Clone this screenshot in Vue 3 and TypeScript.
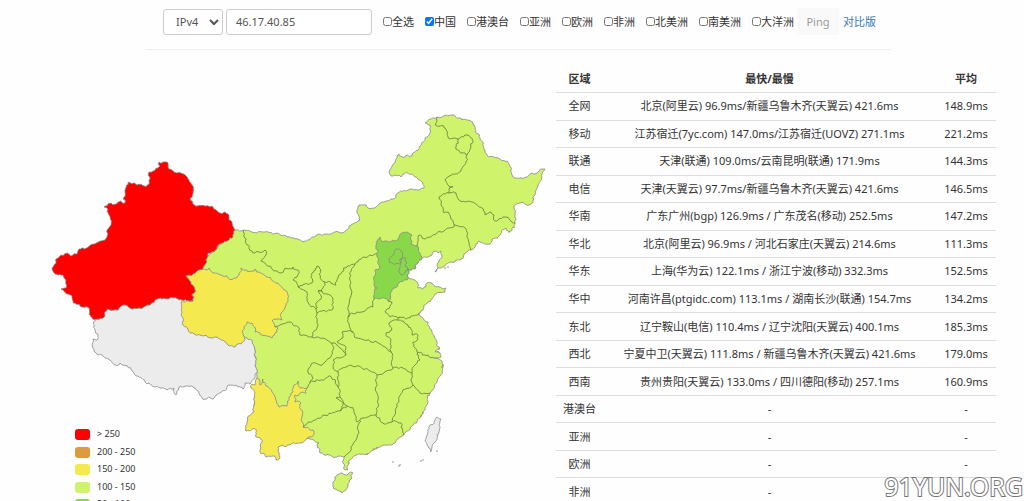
<script setup lang="ts">
import { ref } from 'vue'

type Point = [number, number]

interface RegionOption {
  id: string
  label: string
  checked: boolean
}

interface LatencyRow {
  region: string
  range: string
  average: string
}

interface Shape {
  name: string
  fill: string
  points: string
}

const protocol = ref('IPv4')
const address = ref('46.17.40.85')

const options = ref<RegionOption[]>([
  { id: 'all', label: '全选', checked: false },
  { id: 'china', label: '中国', checked: true },
  { id: 'hmt', label: '港澳台', checked: false },
  { id: 'asia', label: '亚洲', checked: false },
  { id: 'europe', label: '欧洲', checked: false },
  { id: 'africa', label: '非洲', checked: false },
  { id: 'north-america', label: '北美洲', checked: false },
  { id: 'south-america', label: '南美洲', checked: false },
  { id: 'oceania', label: '大洋洲', checked: false },
])

const rows: LatencyRow[] = [
  { region: '全网', range: '北京(阿里云) 96.9ms/新疆乌鲁木齐(天翼云) 421.6ms', average: '148.9ms' },
  { region: '移动', range: '江苏宿迁(7yc.com) 147.0ms/江苏宿迁(UOVZ) 271.1ms', average: '221.2ms' },
  { region: '联通', range: '天津(联通) 109.0ms/云南昆明(联通) 171.9ms', average: '144.3ms' },
  { region: '电信', range: '天津(天翼云) 97.7ms/新疆乌鲁木齐(天翼云) 421.6ms', average: '146.5ms' },
  { region: '华南', range: '广东广州(bgp) 126.9ms / 广东茂名(移动) 252.5ms', average: '147.2ms' },
  { region: '华北', range: '北京(阿里云) 96.9ms / 河北石家庄(天翼云) 214.6ms', average: '111.3ms' },
  { region: '华东', range: '上海(华为云) 122.1ms / 浙江宁波(移动) 332.3ms', average: '152.5ms' },
  { region: '华中', range: '河南许昌(ptgidc.com) 113.1ms / 湖南长沙(联通) 154.7ms', average: '134.2ms' },
  { region: '东北', range: '辽宁鞍山(电信) 110.4ms / 辽宁沈阳(天翼云) 400.1ms', average: '185.3ms' },
  { region: '西北', range: '宁夏中卫(天翼云) 111.8ms / 新疆乌鲁木齐(天翼云) 421.6ms', average: '179.0ms' },
  { region: '西南', range: '贵州贵阳(天翼云) 133.0ms / 四川德阳(移动) 257.1ms', average: '160.9ms' },
  { region: '港澳台', range: '-', average: '-' },
  { region: '亚洲', range: '-', average: '-' },
  { region: '欧洲', range: '-', average: '-' },
  { region: '非洲', range: '-', average: '-' },
]

const legend = [
  { label: '> 250', color: '#ff0000' },
  { label: '200 - 250', color: '#dd9b3d' },
  { label: '150 - 200', color: '#f5e950' },
  { label: '100 - 150', color: '#cff36b' },
  { label: '50 - 100', color: '#89d84a' },
]

const shapes: Shape[] = [
  {
    name: '中国',
    fill: '#cff36b',
    points:
      '235,230 243,230 263,232 277,233 287,237 303,242 313,237 327,234 342,233 348,229 353,224 360,220 357,213 358,207 362,205 368,208 375,208 382,202 393,199 398,193 410,189 424,188 423,183 415,177 412,174 403,174 401,177 395,175 391,176 389,172 397,156 399,154 405,157 412,156 418,150 420,146 425,138 430,133 430,125 425,123 430,119 437,117 453,115 460,118 470,120 475,127 480,138 485,150 487,155 500,159 509,164 513,177 525,177 532,173 545,169 542,177 538,185 535,195 529,205 520,203 514,207 515,213 515,223 512,229 509,232 506,228 500,235 492,239 490,244 483,243 479,241 475,247 471,250 460,260 452,262 443,267 435,272 438,267 437,264 442,257 441,251 435,251 430,256 422,258 415,269 408,269 407,275 410,279 417,282 418,288 422,289 427,283 432,283 437,287 446,288 445,292 435,294 427,303 419,313 428,322 432,332 437,342 440,348 435,352 440,353 441,357 434,358 442,363 441,375 437,382 430,393 427,400 423,412 420,418 412,426 405,433 400,437 395,443 380,447 375,449 363,454 353,457 348,462 348,470 344,469 343,463 344,457 330,455 320,453 317,447 319,443 310,439 290,430 255,410 257,378 255,352 250,342 245,338 200,320 187,290 205,260',
  },
  {
    name: '西藏',
    fill: '#ececec',
    points:
      '193,301 182,300 172,297 155,300 150,305 140,308 130,308 123,305 118,310 108,309 103,318 97,319 95,321 95,330 98,335 97,340 93,339 93,348 95,352 102,355 110,360 115,365 120,363 132,371 138,376 145,382 155,387 167,390 174,388 176,395 179,387 185,386 195,388 202,398 213,399 220,393 230,385 238,387 243,389 245,383 250,384 255,377 257,370 255,352 252,343 247,338 235,330',
  },
  {
    name: '青海',
    fill: '#f5e950',
    points:
      '186,276 203,269 209,268 213,273 223,276 235,278 239,275 241,268 248,272 255,269 267,277 278,283 285,290 288,300 285,308 281,313 282,320 272,321 275,327 278,328 275,333 272,338 267,336 255,332 252,323 247,322 244,327 244,337 242,343 235,347 228,345 223,340 213,338 190,333 183,325 182,313 181,302 193,301 192,294 195,290 190,281',
  },
  {
    name: '新疆',
    fill: '#ff0000',
    points:
      '235,230 233,237 223,243 217,247 214,252 208,253 207,262 203,269 186,276 190,281 195,290 192,294 193,301 182,300 172,297 155,300 150,305 140,308 130,308 123,305 118,310 108,309 103,318 97,319 91,317 89,308 80,306 73,303 72,296 61,289 66,288 63,275 55,274 53,267 56,263 56,259 68,253 71,256 77,254 79,249 87,248 107,237 107,230 111,225 108,209 104,207 118,202 125,203 123,199 128,182 137,185 149,184 149,172 158,168 159,162 167,162 168,167 177,173 186,176 192,185 193,192 190,200 193,204 212,206 223,213 228,214 232,223',
  },
  {
    name: '云南',
    fill: '#f5e950',
    points:
      '257,378 260,385 263,379 266,386 272,392 279,407 287,406 289,397 293,392 294,385 298,381 300,388 307,388 306,393 295,395 295,402 301,403 302,417 303,427 313,430 314,434 307,438 300,443 290,445 278,447 279,459 276,460 274,456 266,457 260,450 262,440 256,437 255,429 246,431 247,422 254,412 255,392 251,388 252,384 255,385',
  },
  {
    name: '河北',
    fill: '#89d84a',
    points:
      '376,245 380,237 383,242 390,242 399,237 402,233 407,232 412,235 411,244 417,246 422,258 415,269 408,269 407,275 407,280 399,283 392,290 388,301 374,298 377,288 374,282 375,270 380,268 377,257 378,252',
  },
  { name: '北京', fill: '#89d84a', points: '389,262 391,257 394,254 396,249 402,252 403,257 400,259 401,263 395,264' },
  { name: '天津', fill: '#89d84a', points: '401,259 405,257 407,263 405,266 408,270 403,275 399,272 400,265' },
  { name: '台湾', fill: '#ececec', points: '437,417 441,419 439,432 434,443 431,452 427,445 426,437 430,425' },
  { name: '海南', fill: '#cff36b', points: '335,477 342,473 353,473 352,478 348,487 342,493 334,489 333,482' },
]

const borders: string[] = [
  '243,230 247,245 253,253 265,250 266,255 261,261 272,269 280,273 285,268 293,267 298,270 297,277 293,280 298,287 312,283 312,273 317,266 321,270 320,278 325,282 336,285 338,278 347,267 355,264 363,257 377,253',
  '298,287 307,292 308,302 316,309 316,303 321,299 318,291 323,288 325,282',
  '318,291 322,291 333,298 333,309 317,313 317,323 313,335 312,337',
  '316,309 317,313',
  '275,327 280,325 288,322 298,327 300,335 312,337',
  '312,337 323,338 332,343 340,348 346,355',
  '355,264 350,277 350,287 348,317 353,332',
  '348,317 362,312 373,307 374,298',
  '353,332 357,338 375,341 385,347 391,352',
  '397,320 389,323 392,330 386,333 391,340 391,352 392,360 393,368',
  '388,301 392,302 385,312 390,317 400,317 410,318 417,315 419,313',
  '397,320 400,317',
  '397,320 408,325 412,335 418,335 418,339 413,342 417,352 428,355 434,358',
  '353,332 342,332 343,338 337,342 346,348 346,355 333,360 333,368 338,372',
  '338,372 350,365 363,369 373,372 377,375 393,368',
  '393,368 403,368 412,373 413,367 420,360 417,352',
  '412,373 413,385 420,393 430,393',
  '413,385 403,390 397,407 392,422',
  '392,422 401,423 403,435',
  '377,375 376,387 378,400 376,415',
  '357,422 363,418 376,415 383,423 392,422',
  '361,421 357,438 344,457',
  '303,427 310,422 323,415 340,411 347,406 354,410 357,422',
  '338,372 338,387 340,397 336,398 345,405 347,406',
  '340,397 343,404 340,411',
  '307,388 310,382 322,380 330,376 338,387',
  '332,343 333,350 330,358 322,365 311,364 308,372 313,378 310,382',
  '437,117 435,125 445,128 448,137 458,139 467,135 473,142 467,155 462,153 456,149 458,139',
  '467,155 466,162 461,171 445,180 449,186 453,187 449,189 449,193',
  '449,193 439,197 443,212 450,215 454,224 454,227',
  '449,193 456,193 459,200 472,202 482,208 485,215 491,212 495,221 505,217 515,223',
  '417,246 419,235 425,239 442,232 454,227',
  '454,224 463,227 467,237 471,250',
]

const islets: Point[] = [
  [421, 461], [423, 460], [399, 466], [400, 465], [393, 462], [445, 268], [448, 267],
  [442, 367], [443, 365], [438, 352], [439, 349], [421, 416], [423, 413], [377, 448],
  [374, 449], [367, 454], [349, 463], [437, 451], [509, 232],
]

// Direction-independent noise, so that neighbouring regions share the same edge.
function noise(a: Point, b: Point, seed: number): number {
  const value = Math.sin((a[0] + b[0]) * 12.9898 + (a[1] + b[1]) * 78.233 + seed * 37.719) * 43758.5453
  return value - Math.floor(value) - 0.5
}

function subdivide(a: Point, b: Point, depth: number): Point[] {
  const length = Math.hypot(b[0] - a[0], b[1] - a[1])
  if (depth === 0 || length < 2.5) return [b]
  const spread = Math.min(length * 0.5, 3)
  const middle: Point = [
    (a[0] + b[0]) / 2 + noise(a, b, 1) * spread,
    (a[1] + b[1]) / 2 + noise(a, b, 2) * spread,
  ]
  return [...subdivide(a, middle, depth - 1), ...subdivide(middle, b, depth - 1)]
}

function toPath(source: string, closed: boolean): string {
  const points = source.split(' ').map((pair) => pair.split(',').map(Number) as Point)
  if (closed) points.push(points[0])
  const result: Point[] = [points[0]]
  for (let i = 1; i < points.length; i++) {
    result.push(...subdivide(points[i - 1], points[i], 3))
  }
  const text = result.map(([x, y]) => `${x.toFixed(1)} ${y.toFixed(1)}`).join('L')
  return `M${text}${closed ? 'Z' : ''}`
}

const shapePaths = shapes.map((shape) => ({ ...shape, d: toPath(shape.points, true) }))
const borderPaths = borders.map((border) => toPath(border, false))
</script>

<template>
  <div class="page">
    <form class="toolbar" @submit.prevent>
      <select v-model="protocol" class="control protocol" aria-label="IP">
        <option>IPv4</option>
        <option>IPv6</option>
      </select>
      <input v-model="address" class="control address" type="text" aria-label="IP address" />
      <div class="options">
        <label v-for="option in options" :key="option.id" class="option" :for="option.id">
          <input :id="option.id" v-model="option.checked" type="checkbox" />{{ option.label }}
        </label>
      </div>
      <button class="ping" type="submit">Ping</button>
      <a class="compare" href="#">对比版</a>
    </form>

    <main class="content">
      <svg class="map" viewBox="50 65 500 450" role="img" aria-label="中国">
        <path v-for="shape in shapePaths" :key="shape.name" class="province" :d="shape.d" :fill="shape.fill" />
        <path v-for="(d, index) in borderPaths" :key="index" class="border" :d="d" />
        <circle v-for="([x, y], index) in islets" :key="'islet' + index" class="islet" :cx="x" :cy="y" r="0.8" />
        <g v-for="(item, index) in legend" :key="item.label" :transform="`translate(75 ${429 + Math.round(index * 17.6)})`">
          <rect width="15" height="11" rx="3" :fill="item.color" />
          <text class="legend-label" x="22" y="8">{{ item.label }}</text>
        </g>
      </svg>

      <table class="results">
        <thead>
          <tr>
            <th class="region" scope="col">区域</th>
            <th scope="col">最快/最慢</th>
            <th class="average" scope="col">平均</th>
          </tr>
        </thead>
        <tbody>
          <tr v-for="row in rows" :key="row.region">
            <td>{{ row.region }}</td>
            <td>{{ row.range }}</td>
            <td>{{ row.average }}</td>
          </tr>
        </tbody>
      </table>
    </main>

    <div class="watermark">91YUN.ORG</div>
  </div>
</template>

<style>
body {
  margin: 0;
  background: #fefefe;
}
</style>

<style scoped>
.page {
  position: relative;
  height: 100vh;
  overflow: hidden;
  color: #333;
  font-family: "Noto Sans", "Noto Sans CJK SC", sans-serif;
  font-size: 11px;
  line-height: 16px;
}

.toolbar {
  display: flex;
  align-items: center;
  margin: 0 132px 0 146px;
  padding: 8px 0 14px 17px;
  border-bottom: 1px solid #eee;
}

.control {
  box-sizing: border-box;
  height: 26px;
  border: 1px solid #ccc;
  border-radius: 3px;
  background: #fff;
  color: #555;
  font: inherit;
}

.protocol {
  width: 60px;
  padding: 0 0 0 8px;
}

.address {
  width: 146px;
  margin-left: 3px;
  padding: 0 9px;
}

.options {
  display: flex;
  gap: 11px;
  margin-left: 11px;
}

.option {
  display: flex;
  align-items: center;
  white-space: nowrap;
}

.option input {
  width: 9px;
  height: 9px;
  margin: 0;
}

.ping {
  width: 42px;
  height: 27px;
  margin-left: 3px;
  padding: 0;
  border: 0;
  background: #f9f9f9;
  color: #999;
  font: inherit;
}

.compare {
  margin-left: 4px;
  color: #337ab7;
  text-decoration: none;
  white-space: nowrap;
}

.content {
  display: grid;
  grid-template-columns: 500fr 440fr;
  align-items: start;
  gap: 6px;
  padding: 15px 28px 0 50px;
}

.map {
  display: block;
  width: 100%;
}

.province {
  stroke: #888;
  stroke-width: 0.8;
  stroke-linejoin: round;
}

.border {
  fill: none;
  stroke: #66783c;
  stroke-width: 0.8;
}

.islet {
  fill: #888;
}

.legend-label {
  fill: #333;
  font-size: 9px;
}

.results {
  width: 100%;
  height: 441px;
  border-collapse: collapse;
  text-align: center;
}

.results th,
.results td {
  padding: 0;
  border-bottom: 1px solid #ddd;
}

.results th {
  height: 27px;
}

.region {
  width: 47px;
}

.average {
  width: 60px;
}

.watermark {
  position: absolute;
  right: 1px;
  bottom: 0;
  color: #fff;
  font-size: 25px;
  line-height: 29px;
  -webkit-text-stroke: 2px #777;
  paint-order: stroke fill;
}
</style>
